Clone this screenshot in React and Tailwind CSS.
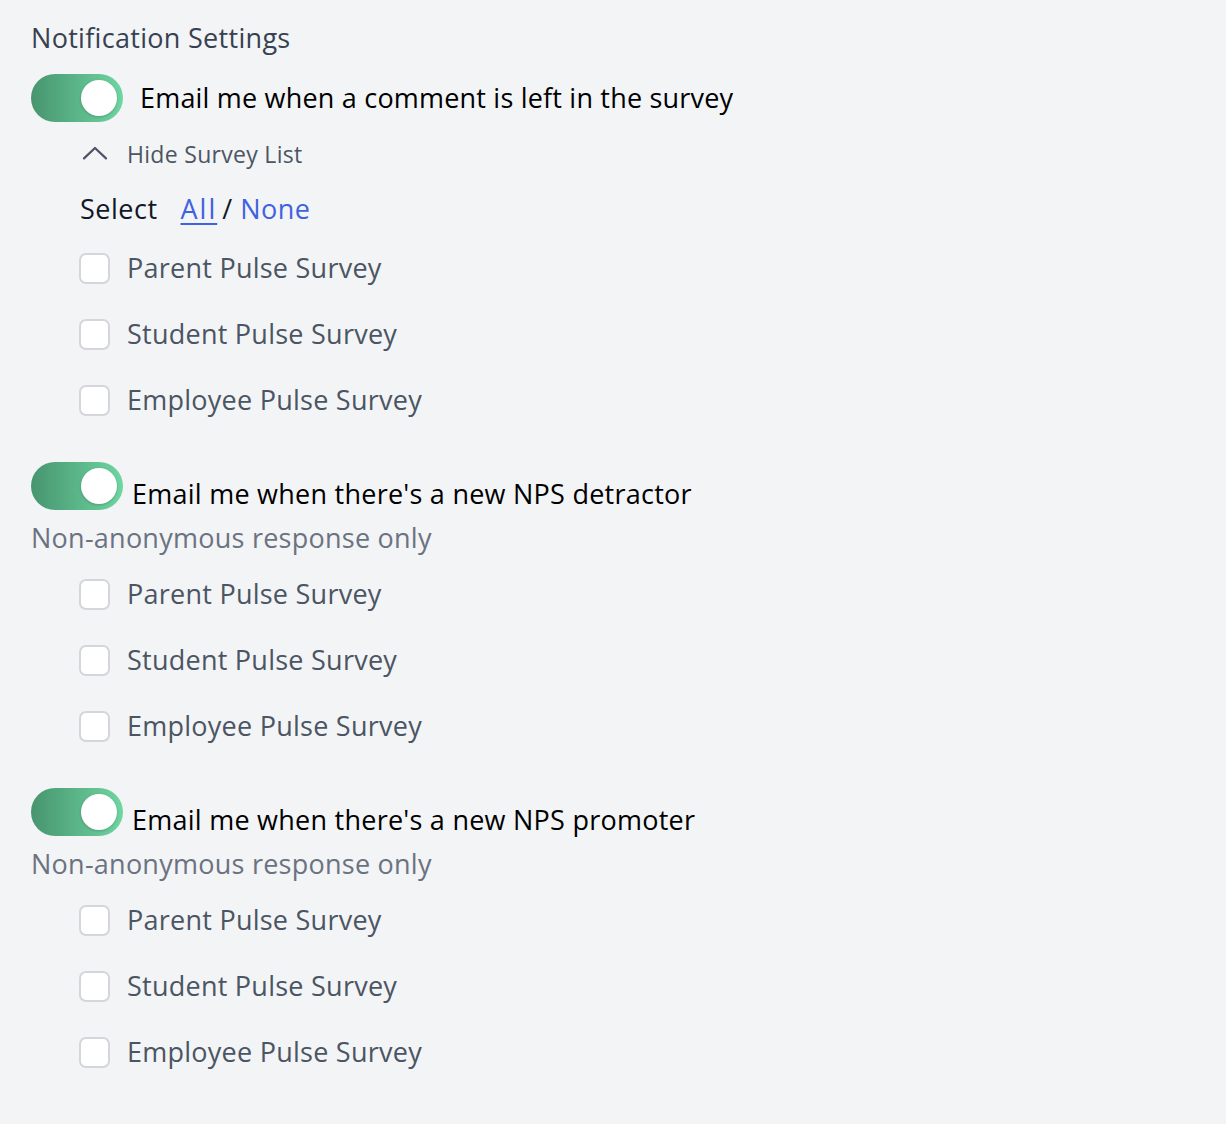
import React, { useState } from "react";

const surveys = ["Parent Pulse Survey", "Student Pulse Survey", "Employee Pulse Survey"];

function Toggle({ on, onClick }) {
  return (
    <button
      onClick={onClick}
      className={`relative w-[92px] h-[48px] rounded-full shrink-0 flex items-center px-[6px] ${
        on ? "bg-gradient-to-r from-[#47956f] to-[#6fd6a2] justify-end" : "bg-gray-300 justify-start"
      }`}
    >
      <span className="block w-[36px] h-[36px] rounded-full bg-white shadow-[0_1px_3px_rgba(0,0,0,0.2)]" />
    </button>
  );
}

function SurveyList() {
  return (
    <div className="flex flex-col pl-[48px]">
      {surveys.map((s) => (
        <label key={s} className="flex items-center h-[66px] gap-[17px] cursor-pointer">
          <span className="w-[31px] h-[31px] rounded-[7px] border-2 border-[#d4d6db] bg-white shrink-0" />
          <span className="text-[27px] leading-[36px] tracking-[0.25px] text-[#4b5563]">{s}</span>
        </label>
      ))}
    </div>
  );
}

function Block({ title }) {
  const [on, setOn] = useState(true);
  return (
    <div className="flex flex-col">
      <div className="flex items-center gap-[9px] h-[48px]">
        <Toggle on={on} onClick={() => setOn(!on)} />
        <span className="text-[27px] leading-[36px] tracking-[0.25px] text-black mt-[16px]">{title}</span>
      </div>
      <div className="text-[27px] tracking-[0.25px] text-[#6b7280] mt-[10px] leading-[36px]">Non-anonymous response only</div>
      <div className="mt-[5px]">
        <SurveyList />
      </div>
    </div>
  );
}

export default function App() {
  const [on, setOn] = useState(true);
  return (
    <div
      className="min-h-[1124px] w-full bg-[#f3f4f6] px-[31px] pt-[20px]"
      style={{ fontFamily: "'Open Sans', 'Noto Sans', sans-serif" }}
    >
      <h2 className="text-[27px] tracking-[0.3px] text-[#374151] leading-[36px]">Notification Settings</h2>

      <div className="mt-[18px] flex flex-col">
        <div className="flex items-center gap-[17px] h-[48px]">
          <Toggle on={on} onClick={() => setOn(!on)} />
          <span className="text-[27px] leading-[36px] tracking-[0.2px] text-black">Email me when a comment is left in the survey</span>
        </div>

        <button className="flex items-center gap-[20px] ml-[52px] mt-[14px] h-[36px] text-[23px] leading-[36px] tracking-[0.3px] text-[#4b5563]">
          <svg width="24" height="24" viewBox="0 0 24 24" fill="none" stroke="#4b5563" strokeWidth="2" strokeLinecap="round" strokeLinejoin="round" className="scale-[1.1]">
            <path d="M2 16l10-9.5 10 9.5" />
          </svg>
          Hide Survey List
        </button>

        <div className="flex items-center ml-[49px] mt-[19px] h-[36px] text-[27px] leading-[36px]">
          <span className="text-[#111827] mr-[23px] tracking-[0.5px]">Select</span>
          <a href="#" className="text-[#3f63e0] underline underline-offset-4 decoration-2 tracking-[2px]">All</a>
          <span className="text-[#111827] ml-[5px] mr-[8px]">/</span>
          <a href="#" className="text-[#3f63e0] tracking-[0.5px]">None</a>
        </div>

        <div className="mt-[8px]">
          <SurveyList />
        </div>
      </div>

      <div className="mt-[29px]">
        <Block title="Email me when there's a new NPS detractor" />
      </div>
      <div className="mt-[29px]">
        <Block title="Email me when there's a new NPS promoter" />
      </div>
    </div>
  );
}
